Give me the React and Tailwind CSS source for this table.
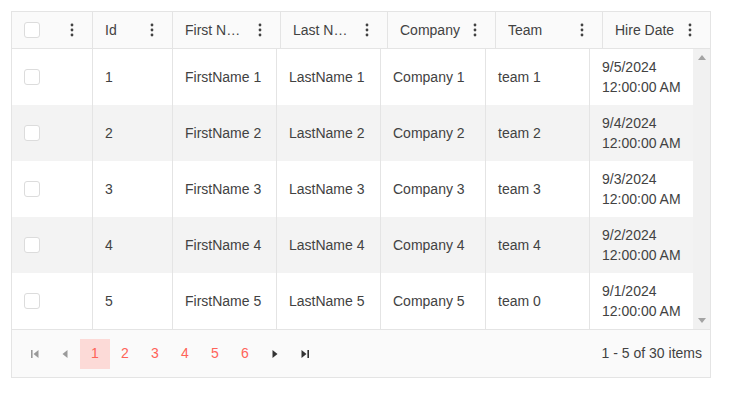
import React from "react";

const rows = [
  { id: 1, first: "FirstName 1", last: "LastName 1", company: "Company 1", team: "team 1", date: "9/5/2024" },
  { id: 2, first: "FirstName 2", last: "LastName 2", company: "Company 2", team: "team 2", date: "9/4/2024" },
  { id: 3, first: "FirstName 3", last: "LastName 3", company: "Company 3", team: "team 3", date: "9/3/2024" },
  { id: 4, first: "FirstName 4", last: "LastName 4", company: "Company 4", team: "team 4", date: "9/2/2024" },
  { id: 5, first: "FirstName 5", last: "LastName 5", company: "Company 5", team: "team 0", date: "9/1/2024" },
];

function Kebab() {
  return (
    <svg width="16" height="16" viewBox="0 0 16 16" className="shrink-0">
      <circle cx="8" cy="3" r="1.4" fill="#424242" />
      <circle cx="8" cy="8" r="1.4" fill="#424242" />
      <circle cx="8" cy="13" r="1.4" fill="#424242" />
    </svg>
  );
}

function Checkbox() {
  return <div className="w-[16px] h-[16px] rounded-[3px] border border-[#dcdcdc] bg-white" />;
}

function HeadCell({ w, label, last }) {
  return (
    <div className={`${w} h-full flex items-center pl-[12px] pr-[12px] gap-[6px] ${last ? "" : "border-r border-[#e4e4e4]"}`}>
      <span className="flex-1 min-w-0 truncate">{label}</span>
      <Kebab />
    </div>
  );
}

function Arrow({ dir, bar, color }) {
  return (
    <svg width="10" height="10" viewBox="0 0 10 10">
      {dir === "left" ? (
        <>
          {bar && <rect x="1" y="1" width="1.6" height="8" fill={color} />}
          <polygon points={bar ? "8.5,1 3.5,5 8.5,9" : "7.5,1 2.5,5 7.5,9"} fill={color} />
        </>
      ) : (
        <>
          <polygon points={bar ? "1.5,1 6.5,5 1.5,9" : "2.5,1 7.5,5 2.5,9"} fill={color} />
          {bar && <rect x="7.4" y="1" width="1.6" height="8" fill={color} />}
        </>
      )}
    </svg>
  );
}

export default function App() {
  return (
    <div className="w-[747px] h-[398px] bg-white pt-[11px] pl-[11px] text-[14px] text-[#424242]" style={{ fontFamily: '"Liberation Sans", Arial, sans-serif' }}>
      <div className="w-[700px] h-[367px] border border-[#e4e4e4] flex flex-col">
        {/* header */}
        <div className="h-[37px] flex bg-[#fafafa] border-b border-[#e4e4e4] shrink-0">
          <div className="w-[81px] h-full flex items-center justify-between pl-[12px] pr-[12px] border-r border-[#e4e4e4]">
            <Checkbox />
            <Kebab />
          </div>
          <HeadCell w="w-[80px]" label="Id" />
          <HeadCell w="w-[108px]" label="First Name" />
          <HeadCell w="w-[107px]" label="Last Name" />
          <HeadCell w="w-[108px]" label="Company" />
          <HeadCell w="w-[107px]" label="Team" />
          <HeadCell w="w-[107px]" label="Hire Date" last />
        </div>
        {/* body */}
        <div className="h-[280px] flex shrink-0">
          <div className="w-[681px] flex flex-col">
            {rows.map((r, i) => (
              <div key={r.id} className={`h-[56px] flex ${i % 2 === 1 ? "bg-[#f3f3f3]" : "bg-white"}`}>
                <div className="w-[81px] flex items-center pl-[12px] border-r border-[#e4e4e4]">
                  <Checkbox />
                </div>
                <div className="w-[80px] flex items-center pl-[12px] border-r border-[#e4e4e4]">{r.id}</div>
                <div className="w-[104px] flex items-center pl-[12px] border-r border-[#e4e4e4] whitespace-nowrap">{r.first}</div>
                <div className="w-[104px] flex items-center pl-[12px] border-r border-[#e4e4e4] whitespace-nowrap">{r.last}</div>
                <div className="w-[105px] flex items-center pl-[12px] border-r border-[#e4e4e4] whitespace-nowrap">{r.company}</div>
                <div className="w-[104px] flex items-center pl-[12px] border-r border-[#e4e4e4] whitespace-nowrap">{r.team}</div>
                <div className="w-[103px] flex flex-col justify-center pl-[12px] leading-[20px] whitespace-nowrap">
                  <span>{r.date}</span>
                  <span>12:00:00 AM</span>
                </div>
              </div>
            ))}
          </div>
          <div className="w-[17px] bg-[#f1f1f1] flex flex-col items-center justify-between py-[6px]">
            <svg width="8" height="5" viewBox="0 0 8 5"><polygon points="0,5 4,0 8,5" fill="#a3a3a3" /></svg>
            <svg width="8" height="5" viewBox="0 0 8 5"><polygon points="0,0 8,0 4,5" fill="#a3a3a3" /></svg>
          </div>
        </div>
        {/* pager */}
        <div className="flex-1 border-t border-[#e4e4e4] bg-[#fafafa] flex items-center px-[8px]">
          <div className="flex items-center">
            <div className="w-[30px] h-[30px] flex items-center justify-center"><Arrow dir="left" bar color="#9a9a9a" /></div>
            <div className="w-[30px] h-[30px] flex items-center justify-center"><Arrow dir="left" color="#9a9a9a" /></div>
            {[1, 2, 3, 4, 5, 6].map((n) => (
              <div key={n} className={`w-[30px] h-[30px] flex items-center justify-center text-[#ff6358] ${n === 1 ? "bg-[#fcdad7]" : ""}`}>{n}</div>
            ))}
            <div className="w-[30px] h-[30px] flex items-center justify-center"><Arrow dir="right" color="#333333" /></div>
            <div className="w-[30px] h-[30px] flex items-center justify-center"><Arrow dir="right" bar color="#333333" /></div>
          </div>
          <div className="ml-auto">1 - 5 of 30 items</div>
        </div>
      </div>
    </div>
  );
}
